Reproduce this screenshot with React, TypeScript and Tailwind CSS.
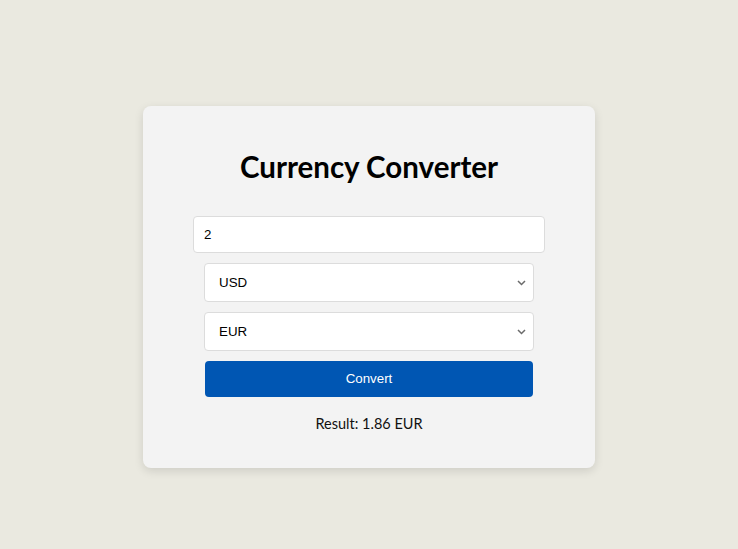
import { useState } from "react";

const rates: Record<string, number> = { USD: 1, EUR: 0.93, GBP: 0.79, JPY: 151.2 };

const Chevron = () => (
  <svg
    className="pointer-events-none absolute right-[8px] top-1/2 -translate-y-1/2"
    width="9"
    height="6"
    viewBox="0 0 9 6"
    fill="none"
  >
    <path d="M1 1l3.5 3.5L8 1" stroke="#6b6b6b" strokeWidth="1.5" />
  </svg>
);

const CurrencySelect = ({ value, onChange }: { value: string; onChange: (v: string) => void }) => (
  <div className="relative w-[330px]">
    <select
      value={value}
      onChange={(e) => onChange(e.target.value)}
      className="h-[39px] w-full appearance-none rounded-[4px] border border-[#dcdcdc] bg-white pl-[14px] font-['Liberation_Sans',Arial,sans-serif] text-[13.33px] text-black outline-none"
    >
      {Object.keys(rates).map((c) => (
        <option key={c} value={c}>
          {c}
        </option>
      ))}
    </select>
    <Chevron />
  </div>
);

export default function App() {
  const [amount, setAmount] = useState("2");
  const [from, setFrom] = useState("USD");
  const [to, setTo] = useState("EUR");
  const [result, setResult] = useState("1.86 EUR");

  const convert = () => {
    const v = (parseFloat(amount) || 0) * (rates[to] / rates[from]);
    setResult(`${v.toFixed(2)} ${to}`);
  };

  return (
    <div className="min-h-screen w-full bg-[#eae9e0] pt-[106px] font-['Lato',sans-serif]">
      <div className="mx-auto flex h-[362px] w-[452px] flex-col items-center rounded-[8px] bg-[#f3f3f3] shadow-[0_3px_10px_rgba(0,0,0,0.12)]">
        <h1 className="mt-[41px] text-[29.5px] font-bold leading-[39px] text-black">Currency Converter</h1>

        <input
          value={amount}
          onChange={(e) => setAmount(e.target.value)}
          className="mt-[30px] h-[37px] w-[352px] rounded-[4px] border border-[#dcdcdc] bg-white px-[10px] font-['Liberation_Sans',Arial,sans-serif] text-[13.33px] text-black outline-none"
        />

        <div className="mt-[10px] flex flex-col items-center gap-[10px]">
          <CurrencySelect value={from} onChange={setFrom} />
          <CurrencySelect value={to} onChange={setTo} />
          <button
            onClick={convert}
            className="h-[36px] w-[328px] rounded-[4px] bg-[#0056b3] font-['Liberation_Sans',Arial,sans-serif] text-[13.33px] text-white"
          >
            Convert
          </button>
        </div>

        <p className="mt-[17px] text-[14.5px] leading-[20px] text-[#111]">Result: {result}</p>
      </div>
    </div>
  );
}
